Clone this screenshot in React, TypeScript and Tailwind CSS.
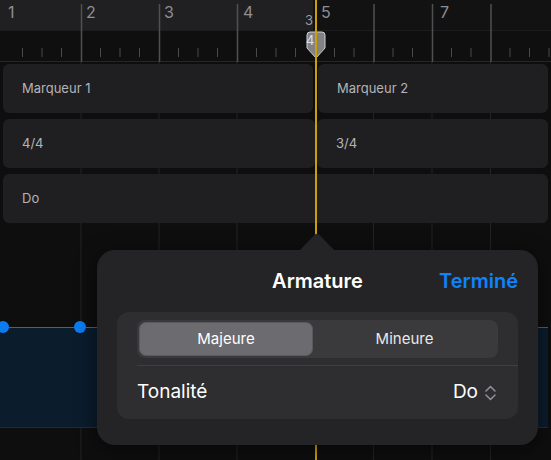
import React from "react";

// tick positions every beat (19.5px) across both meters
const ticks: number[] = [];
for (let x = 3 + 19.5; x < 315; x += 19.5) ticks.push(x);
for (let x = 315 + 19.5; x < 551; x += 19.5) ticks.push(x);

const barLines = [81, 159, 237, 373.5, 432, 490.5];

const labels = [
  { n: "1", x: 8 },
  { n: "2", x: 86 },
  { n: "3", x: 164 },
  { n: "4", x: 243 },
  { n: "5", x: 321 },
  { n: "7", x: 440 },
];

const Region: React.FC<{ label?: string; className?: string }> = ({ label, className }) => (
  <div className={`h-full rounded-[6px] bg-[#1f1f21] flex items-center pl-[19px] text-[13px] text-[#b4b4b8] ${className ?? ""}`}>
    {label}
  </div>
);

const App: React.FC = () => {
  return (
    <div
      className="relative w-[551px] h-[460px] overflow-hidden bg-[#0e0e0f]"
      style={{ fontFamily: "Inter, 'Noto Sans', sans-serif" }}
    >
      {/* grid behind everything */}
      <svg className="absolute inset-0" width="551" height="460">
        {barLines.map((x) => (
          <line key={x} x1={x} x2={x} y1={62} y2={460} stroke="#232325" strokeWidth={1} />
        ))}
      </svg>

      {/* Ruler */}
      <div className="relative h-[62px]">
        <div className="flex h-[31px] border-b border-[#1c1c1e]">
          <div className="w-[313px] bg-[#202022]" />
          <div className="flex-1 bg-[#121213]" />
        </div>
        <div className="h-[31px] bg-[#0f0f10] border-b border-[#262628]" />
        <svg className="absolute inset-0" width="551" height="62">
          {barLines.map((x) => (
            <line key={x} x1={x + 0.5} x2={x + 0.5} y1={4} y2={62} stroke="#505053" strokeWidth={1.5} />
          ))}
          {ticks
            .filter((t) => !barLines.some((b) => Math.abs(b - t) < 1) && Math.abs(t - 315) > 1)
            .map((t) => (
              <line key={t} x1={t} x2={t} y1={48} y2={57} stroke="#4a4a4c" strokeWidth={1} />
            ))}
        </svg>
        {labels.map((l) => (
          <span
            key={l.n}
            className="absolute top-[4px] text-[16px] leading-none text-[#8e8e93]"
            style={{ left: l.x }}
          >
            {l.n}
          </span>
        ))}
        {/* time signature marker */}
        <span className="absolute left-[305px] top-[14px] text-[13px] leading-none text-[#9a9a9e]">3</span>
        <svg className="absolute left-[306px] top-[31px]" width="20" height="28" viewBox="0 0 20 28">
          <path d="M4 1 H16 Q19 1 19 4 V17 L10 27 L1 17 V4 Q1 1 4 1 Z" fill="#828286" stroke="#d0d0d4" strokeWidth="1" />
        </svg>
        <span className="absolute left-[306px] top-[34px] text-[13px] leading-none text-[#e0e0e4]">4</span>
      </div>

      {/* Track rows */}
      <div className="relative flex flex-col gap-[6px] pt-[2px] pl-[3px] pr-[3px]">
        <div className="flex h-[49px] gap-[5px]">
          <Region label="Marqueur 1" className="w-[310px]" />
          <Region label="Marqueur 2" className="flex-1" />
        </div>
        <div className="flex h-[49px] gap-[2px]">
          <Region label="4/4" className="w-[312px]" />
          <Region label="3/4" className="flex-1" />
        </div>
        <div className="flex h-[49px]">
          <Region label="Do" className="flex-1" />
        </div>
      </div>

      {/* automation region */}
      <div className="relative mt-[104px] mr-[3px] h-[101px] border-t border-[#0a6fd6] border-b border-b-[#2a2a2c] bg-[#0b1c2d]">
        <div className="absolute -left-[3px] -top-[7px] w-[12px] h-[12px] rounded-full bg-[#0a7cf0]" />
        <div className="absolute left-[74px] -top-[7px] w-[12px] h-[12px] rounded-full bg-[#0a7cf0]" />
      </div>

      {/* playhead */}
      <div className="absolute left-[315px] top-0 w-[2px] h-[460px] bg-[#c9a100]" />

      {/* Popover */}
      <div className="absolute left-[97px] top-[250px] w-[441px] h-[195px] rounded-[18px] bg-[#242426] shadow-[0_4px_20px_rgba(0,0,0,0.5)]">
        <svg className="absolute left-[202px] -top-[17px]" width="36" height="18" viewBox="0 0 36 18">
          <path d="M0 18 L15.5 2 Q18 -0.5 20.5 2 L36 18 Z" fill="#242426" />
        </svg>
        <div className="relative flex items-center justify-center h-[62px] px-[20px]">
          <span className="text-[20px] font-semibold text-white">Armature</span>
          <span className="absolute right-[20px] text-[20px] font-semibold text-[#0a84ff]">Terminé</span>
        </div>
        <div className="mx-[20px] rounded-[12px] bg-[#2e2e30]">
          <div className="px-[20px] pt-[8px] pb-[7px]">
            <div className="flex h-[38px] rounded-[8px] bg-[#3a3a3c] p-[2px]">
              <div className="w-[174px] flex items-center justify-center rounded-[7px] bg-[#6c6c70] border border-[#5a5a5e] text-[15px] text-white">
                Majeure
              </div>
              <div className="flex-1 flex items-center justify-center text-[15px] text-[#e8e8ea]">Mineure</div>
            </div>
          </div>
          <div className="ml-[20px] h-px bg-[#3f3f42]" />
          <div className="flex items-center justify-between h-[53px] pl-[20px] pr-[21px]">
            <span className="text-[19px] text-white">Tonalité</span>
            <span className="flex items-center gap-[6px] text-[19px] text-white">
              Do
              <svg width="13" height="16" viewBox="0 0 13 16">
                <path d="M2 6 L6.5 1.5 L11 6 M2 10 L6.5 14.5 L11 10" fill="none" stroke="#8e8e93" strokeWidth="1.6" strokeLinecap="round" strokeLinejoin="round" />
              </svg>
            </span>
          </div>
        </div>
      </div>
    </div>
  );
};

export default App;
